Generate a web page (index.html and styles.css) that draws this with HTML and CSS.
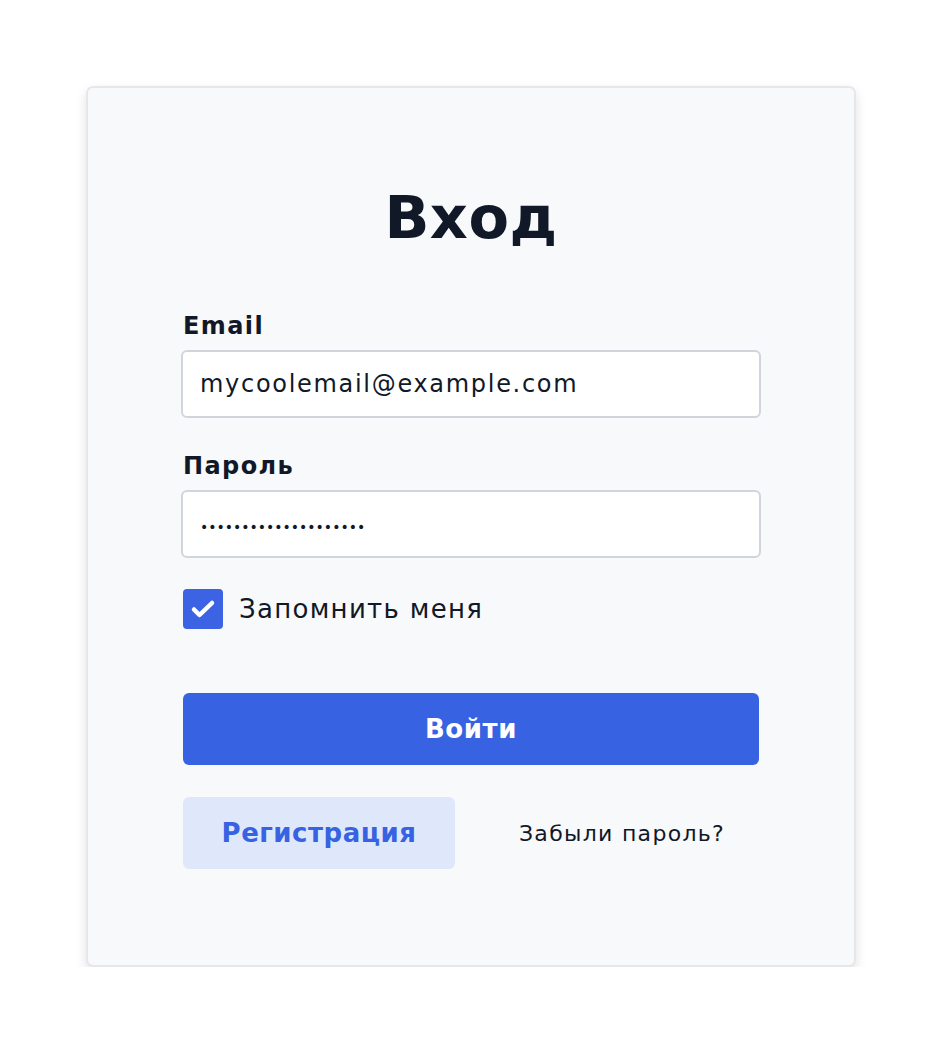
FILE: index.html
```html
<!DOCTYPE html>
<html lang="ru">
<head>
<meta charset="utf-8">
<title>Вход</title>
<link rel="stylesheet" href="styles.css">
</head>
<body>
<div class="card">
  <h1 class="title">Вход</h1>
  <form class="form">
    <label class="label" for="email">Email</label>
    <div class="input">mycoolemail@example.com</div>
    <label class="label label-gap" for="pw">Пароль</label>
    <div class="input pw">••••••••••••••••••••</div>
    <div class="remember">
      <span class="check">
        <svg width="28" height="28" viewBox="0 0 28 28"><path d="M5 14.5l5.5 5.5L23 8" fill="none" stroke="#fff" stroke-width="4.5" stroke-linecap="round" stroke-linejoin="round"/></svg>
      </span>
      <span class="remember-text">Запомнить меня</span>
    </div>
    <div class="btn-primary">Войти</div>
    <div class="bottom">
      <div class="btn-secondary">Регистрация</div>
      <a class="forgot">Забыли пароль?</a>
    </div>
  </form>
</div>
</body>
</html>
```
FILE: styles.css
```css
* { box-sizing: border-box; }
body {
  margin: 0;
  padding: 86px 0 0;
  background: #ffffff;
  font-family: "DejaVu Sans", "Noto Sans", sans-serif;
  color: #111827;
}
.card {
  width: 770px;
  margin: 0 auto;
  background: #f8f9fb;
  border: 2px solid #e5e7eb;
  border-radius: 7px;
  box-shadow: 0 5px 12px rgba(0,0,0,0.12);
  padding: 94px 95px 96px;
}
.title {
  margin: 0 0 56px;
  text-align: center;
  font-size: 59px;
  line-height: 72px;
  font-weight: 700;
  letter-spacing: 0.5px;
  color: #111827;
}
.form { display: flex; flex-direction: column; }
.label {
  font-size: 24px;
  font-weight: 700;
  letter-spacing: 1.4px;
  line-height: 32px;
  margin-bottom: 8px;
}
.label-gap { margin-top: 32px; }
.input {
  height: 68px;
  margin: 0 -2px;
  background: #fff;
  border: 2px solid #d1d5db;
  border-radius: 6px;
  padding: 0 17px;
  display: flex;
  align-items: center;
  font-size: 24px;
  letter-spacing: 1.7px;
  color: #111827;
}
.pw { font-size: 14px; letter-spacing: 0px; padding-top: 5px; }
.remember {
  display: flex;
  align-items: center;
  gap: 16px;
  margin-top: 31px;
}
.check {
  width: 40px; height: 40px;
  background: #3b63e3;
  border-radius: 4px;
  display: flex; align-items: center; justify-content: center;
}
.remember-text { font-size: 26px; letter-spacing: 1.3px; }
.btn-primary {
  margin-top: 64px;
  height: 72px;
  background: #3763e2;
  border-radius: 6px;
  color: #fff;
  font-size: 26px;
  font-weight: 700;
  letter-spacing: 0.6px;
  display: flex; align-items: center; justify-content: center;
}
.bottom {
  margin-top: 32px;
  display: flex;
  align-items: center;
}
.btn-secondary {
  width: 272px;
  height: 72px;
  background: #dfe8fb;
  border-radius: 6px;
  color: #3763e2;
  font-size: 26px;
  font-weight: 700;
  letter-spacing: 0.5px;
  display: flex; align-items: center; justify-content: center;
}
.forgot {
  flex: 1;
  padding-left: 30px;
  text-align: center;
  font-size: 22px;
  letter-spacing: 1.3px;
  color: #111827;
}
```
